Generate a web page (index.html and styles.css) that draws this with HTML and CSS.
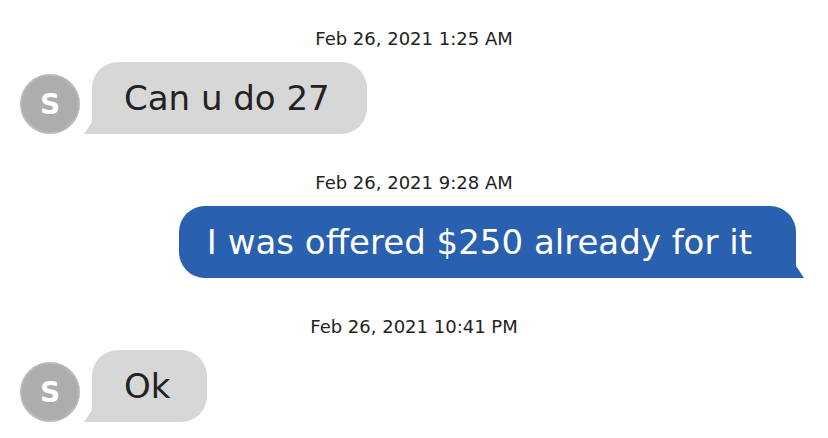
FILE: index.html
```
<!DOCTYPE html>
<html lang="en">
<head>
<meta charset="utf-8">
<meta name="viewport" content="width=device-width, initial-scale=1">
<title>Messages</title>
<link rel="stylesheet" href="styles.css">
</head>
<body>
<main class="chat">
  <section class="entry">
    <time class="stamp" datetime="2021-02-26T01:25">Feb 26, 2021 1:25 AM</time>
    <div class="row">
      <span class="avatar">S</span>
      <p class="bubble incoming">Can u do 27</p>
    </div>
  </section>
  <section class="entry">
    <time class="stamp" datetime="2021-02-26T09:28">Feb 26, 2021 9:28 AM</time>
    <div class="row own">
      <p class="bubble outgoing">I was offered $250 already for it</p>
    </div>
  </section>
  <section class="entry">
    <time class="stamp" datetime="2021-02-26T22:41">Feb 26, 2021 10:41 PM</time>
    <div class="row">
      <span class="avatar">S</span>
      <p class="bubble incoming">Ok</p>
    </div>
  </section>
</main>
</body>
</html>
```
FILE: styles.css
```
body {
  margin: 0;
  background: #fff;
  color: #222;
  font-family: "DejaVu Sans", sans-serif;
}

.chat {
  display: flex;
  flex-direction: column;
  gap: 37px;
  padding: 27px 32px 16px 20px;
}

.entry {
  display: flex;
  flex-direction: column;
  gap: 11px;
}

.stamp {
  padding-left: 12px;
  font-size: 18px;
  line-height: 24px;
  text-align: center;
}

.row {
  display: flex;
  align-items: flex-end;
  gap: 12px;
}

.own {
  justify-content: flex-end;
}

.avatar {
  display: flex;
  align-items: center;
  justify-content: center;
  box-sizing: border-box;
  width: 60px;
  height: 60px;
  border: 2px solid #b9b9b9;
  border-radius: 50%;
  background: #adadad;
  color: #fff;
  font-size: 28px;
  font-weight: 700;
}

.bubble {
  position: relative;
  margin: 0;
  padding: 16px 37px 16px 32px;
  font-size: 34px;
  line-height: 40px;
}

.bubble::after {
  content: "";
  position: absolute;
  bottom: 0;
  width: 8px;
  height: 12px;
  background: inherit;
}

.incoming {
  border-radius: 26px 26px 26px 0;
  background: #d7d7d7;
}

.incoming::after {
  right: 100%;
  clip-path: polygon(100% 0, 100% 100%, 0 100%);
}

.outgoing {
  padding: 16px 44px 16px 28px;
  border-radius: 26px 26px 0 26px;
  background: #2960b0;
  color: #fff;
}

.outgoing::after {
  left: 100%;
  clip-path: polygon(0 0, 100% 100%, 0 100%);
}
```
